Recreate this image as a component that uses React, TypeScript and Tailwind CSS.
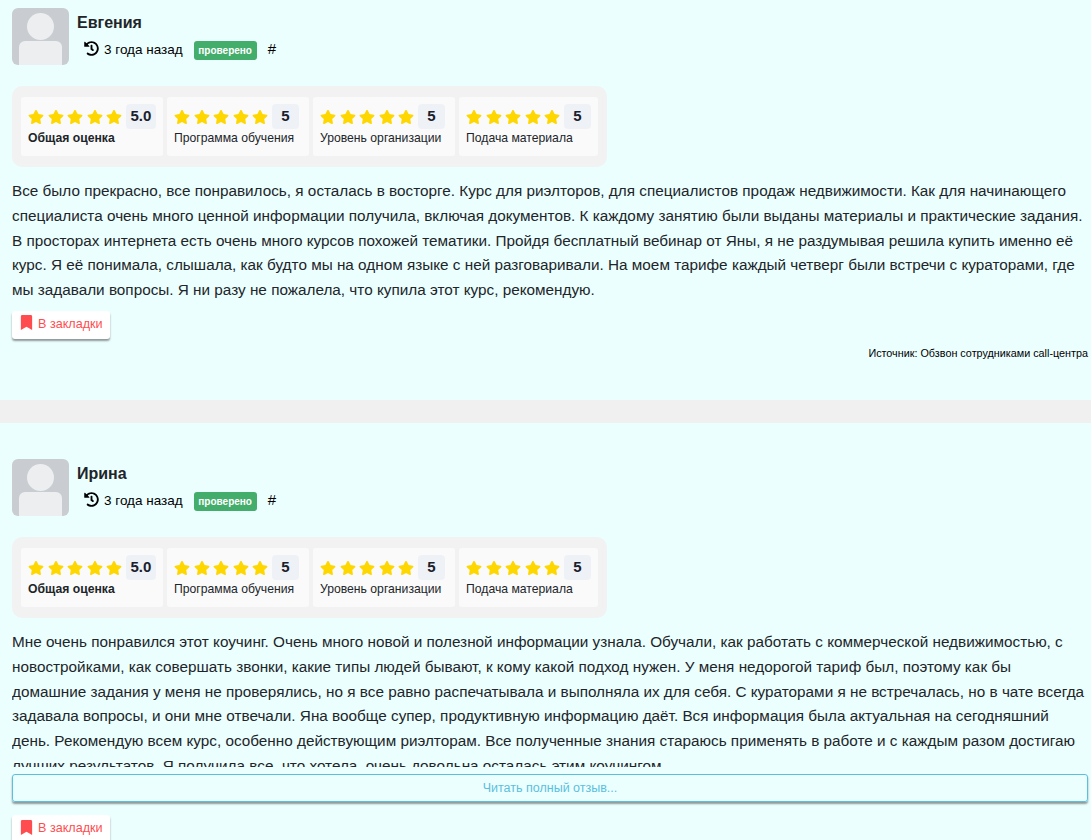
import { FaBookmark, FaHistory, FaStar } from "react-icons/fa";

const F = "font-['Liberation_Sans',Arial,sans-serif]";

function RatingCell({ score, label, bold, width }: { score: string; label: string; bold?: boolean; width: string }) {
  return (
    <div className={`${width} h-[59px] rounded-[3px] bg-[#fafafa] pl-[7px] pt-[7px]`}>
      <div className="flex items-center h-[25px]">
        <div className="flex gap-[3.5px] text-[#ffd700] text-[16px]">
          <FaStar /><FaStar /><FaStar /><FaStar /><FaStar />
        </div>
        <div className="ml-[4px] flex h-[25px] min-w-[27px] px-[4.5px] items-center justify-center rounded-[4px] bg-[#eef2f7] text-[15px] font-bold text-[#1a202c]">
          {score}
        </div>
      </div>
      <div className={`text-[12.2px] leading-[18px] text-[#212529] ${bold ? "font-bold" : ""}`}>{label}</div>
    </div>
  );
}

function Bookmark() {
  return (
    <div className="ml-[12px] flex h-[28px] w-[98px] items-center rounded-[3px] bg-white pb-[1px] pl-[7px] text-[12.6px] text-[#ff4d4f] shadow-[0_2px_2px_rgba(0,0,0,0.4)]">
      <FaBookmark className="mr-[4px] -mt-[3px] text-[15px]" />В закладки
    </div>
  );
}

function Review({ name, top, children }: { name: string; top: string; children: React.ReactNode }) {
  return (
    <section className={`${top}`}>
      <div className="flex pl-[12px]">
        <div className="relative h-[57px] w-[57px] overflow-hidden rounded-[6px] bg-[#c9cdd1]">
          <div className="absolute left-[15px] top-[5px] h-[27px] w-[27px] rounded-full bg-[#eceef0]" />
          <div className="absolute left-[7px] top-[33px] h-[30px] w-[43px] rounded-[6px] bg-[#eceef0]" />
        </div>
        <div className="ml-[8px]">
          <div className="mt-[5px] text-[16px] font-bold leading-[20px] text-[#212529]">{name}</div>
          <div className="ml-[7px] mt-[7px] flex h-[20px] items-center text-[13.5px] text-black">
            <FaHistory className="mr-[5px] -mt-[3px] text-[15px]" />3 года назад
            <span className="ml-[11px] flex h-[19px] w-[63px] items-center justify-center rounded-[3px] bg-[#43ad6c] text-[10px] font-bold text-white">проверено</span>
            <span className="ml-[11px] -mt-[2px] text-[15px]">#</span>
          </div>
        </div>
      </div>
      <div className="ml-[12px] mt-[21px] flex h-[81px] w-[595px] items-start gap-[4px] rounded-[10px] bg-[#f2f2f2] pl-[9px] pt-[11px]">
        <RatingCell score="5.0" label="Общая оценка" bold width="w-[142px]" />
        <RatingCell score="5" label="Программа обучения" width="w-[142px]" />
        <RatingCell score="5" label="Уровень организации" width="w-[142px]" />
        <RatingCell score="5" label="Подача материала" width="w-[139px]" />
      </div>
      {children}
    </section>
  );
}

export default function App() {
  return (
    <div className={`${F} h-[840px] w-[1091px] overflow-hidden bg-[#ecffff]`}>
      <Review name="Евгения" top="h-[400px] pt-[8px]">
        <p className="ml-[12px] mr-[3px] mt-[12px] text-[15.3px] leading-[24.75px] text-[#212529]">
          Все было прекрасно, все понравилось, я осталась в восторге. Курс для риэлторов, для специалистов продаж недвижимости. Как для начинающего специалиста очень много ценной информации получила, включая документов. К каждому занятию были выданы материалы и практические задания. В просторах интернета есть очень много курсов похожей тематики. Пройдя бесплатный вебинар от Яны, я не раздумывая решила купить именно её курс. Я её понимала, слышала, как будто мы на одном языке с ней разговаривали. На моем тарифе каждый четверг были встречи с кураторами, где мы задавали вопросы. Я ни разу не пожалела, что купила этот курс, рекомендую.
        </p>
        <div className="mt-[8px]"><Bookmark /></div>
        <div className="mr-[3px] mt-[8px] text-right text-[10.8px] leading-[12px] text-black">Источник: Обзвон сотрудниками call-центра</div>
      </Review>
      <div className="h-[23px] bg-[#f0f0f0]" />
      <Review name="Ирина" top="pt-[36px]">
        <div className="ml-[12px] mr-[3px] mt-[12px] h-[137px] overflow-hidden">
          <p className="text-[15.3px] leading-[24.75px] text-[#212529]">
            Мне очень понравился этот коучинг. Очень много новой и полезной информации узнала. Обучали, как работать с коммерческой недвижимостью, с новостройками, как совершать звонки, какие типы людей бывают, к кому какой подход нужен. У меня недорогой тариф был, поэтому как бы домашние задания у меня не проверялись, но я все равно распечатывала и выполняла их для себя. С кураторами я не встречалась, но в чате всегда задавала вопросы, и они мне отвечали. Яна вообще супер, продуктивную информацию даёт. Вся информация была актуальная на сегодняшний день. Рекомендую всем курс, особенно действующим риэлторам. Все полученные знания стараюсь применять в работе и с каждым разом достигаю лучших результатов. Я получила все, что хотела, очень довольна осталась этим коучингом.
          </p>
        </div>
        <div className="mx-[3px] ml-[12px] mt-[7px] flex h-[28px] items-center justify-center rounded-[3px] border border-[#5bc0de] text-[12.5px] text-[#5bc0de] shadow-[0_2px_2px_rgba(0,0,0,0.4)]">
          Читать полный отзыв...
        </div>
        <div className="mt-[13px]"><Bookmark /></div>
      </Review>
    </div>
  );
}
